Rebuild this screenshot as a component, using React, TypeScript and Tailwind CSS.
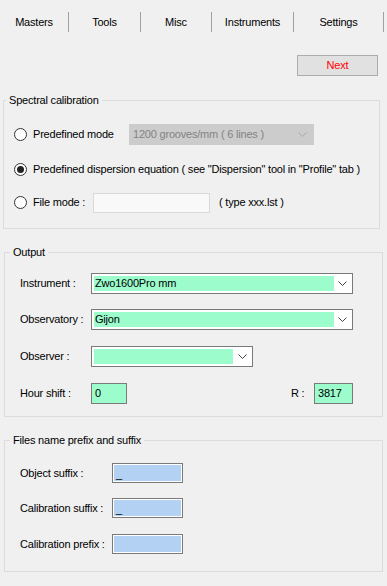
import React from 'react';

const tabs = [
  { label: 'Masters', w: 'w-[69px]' },
  { label: 'Tools', w: 'w-[72px]' },
  { label: 'Misc', w: 'w-[71px]' },
  { label: 'Instruments', w: 'w-[82px]' },
  { label: 'Settings', w: 'w-[90px]' },
];

const Chevron = ({ color = '#444' }: { color?: string }) => (
  <svg width="9" height="5" viewBox="0 0 9 5" className="shrink-0">
    <path d="M0.5 0.5 L4.5 4.5 L8.5 0.5" fill="none" stroke={color} strokeWidth="1" />
  </svg>
);

const Radio = ({ checked }: { checked?: boolean }) => (
  <span className="w-[13px] h-[13px] rounded-full border border-[#333] bg-white flex items-center justify-center shrink-0">
    {checked && <span className="w-[7px] h-[7px] rounded-full bg-[#222]" />}
  </span>
);

const GreenCombo = ({ value, width, fill }: { value: string; width: string; fill: string }) => (
  <div className={`${width} h-[21px] border border-[#7a7a7a] bg-white flex items-center pl-[2px] pr-[5px]`}>
    <div className={`${fill} h-[15px] bg-[#9cfccc] flex items-center pl-[1px]`}>{value}</div>
    <div className="flex-1 flex justify-end">
      <Chevron />
    </div>
  </div>
);

export default function App() {
  return (
    <div
      className="w-[387px] h-[586px] bg-[#f0f0f0] text-[11px] tracking-[-0.2px] text-black overflow-hidden whitespace-nowrap"
      style={{ fontFamily: '"Liberation Sans", Arial, sans-serif' }}
    >
      {/* onglets */}
      <div className="flex pt-[12px]">
        {tabs.map((t) => (
          <div key={t.label} className={`${t.w} h-[20px] border-r border-[#a0a0a0] flex items-center justify-center`}>
            {t.label}
          </div>
        ))}
      </div>

      <div className="flex justify-end pr-[9px] mt-[23px]">
        <button className="w-[81px] h-[21px] border border-[#adadad] bg-[#e1e1e1] text-[#ff0000] text-[11px] tracking-[-0.2px]">Next</button>
      </div>

      {/* Spectral calibration */}
      <fieldset className="ml-[3px] mt-[17px] w-[377px] border border-[#dcdcdc]">
        <legend className="ml-[2px] px-[3px] leading-[14px]">Spectral calibration</legend>
        <div className="pl-[10px] pb-[15px]">
          <div className="mt-[17px] h-[21px] flex items-center">
            <Radio />
            <span className="ml-[6px] w-[96px]">Predefined mode</span>
            <div className="w-[185px] h-[21px] bg-[#cccccc] flex items-center justify-between pl-[4px] pr-[7px] text-[#838383]">
              <span>1200 grooves/mm ( 6 lines )</span>
              <Chevron color="#a8a8a8" />
            </div>
          </div>
          <div className="mt-[14px] h-[21px] flex items-center">
            <Radio checked />
            <span className="ml-[6px]">Predefined dispersion equation ( see "Dispersion" tool in "Profile" tab )</span>
          </div>
          <div className="mt-[12px] h-[21px] flex items-center">
            <Radio />
            <span className="ml-[6px] w-[60px]">File mode :</span>
            <div className="w-[117px] h-[20px] border border-[#d9d9d9] bg-[#f9f9f9]" />
            <span className="ml-[9px]">( type xxx.lst )</span>
          </div>
        </div>
      </fieldset>

      {/* Output */}
      <fieldset className="ml-[4px] mt-[16px] w-[379px] border border-[#dcdcdc]">
        <legend className="ml-[5px] px-[3px] leading-[14px]">Output</legend>
        <div className="pl-[15px] pb-[12px]">
          <div className="mt-[14px] flex items-center">
            <span className="w-[71px]">Instrument :</span>
            <GreenCombo value="Zwo1600Pro mm" width="w-[262px]" fill="w-[240px]" />
          </div>
          <div className="mt-[15px] flex items-center">
            <span className="w-[71px]">Observatory :</span>
            <GreenCombo value="Gijon" width="w-[262px]" fill="w-[240px]" />
          </div>
          <div className="mt-[16px] flex items-center">
            <span className="w-[71px]">Observer :</span>
            <GreenCombo value="" width="w-[162px]" fill="w-[139px]" />
          </div>
          <div className="mt-[16px] flex items-center">
            <span className="w-[71px]">Hour shift :</span>
            <div className="w-[36px] h-[21px] border border-[#7a7a7a] bg-[#9cfccc] flex items-center pl-[3px]">0</div>
            <span className="ml-auto w-[23px]">R :</span>
            <div className="mr-[29px] w-[39px] h-[21px] border border-[#7a7a7a] bg-[#9cfccc] flex items-center pl-[3px]">3817</div>
          </div>
        </div>
      </fieldset>

      {/* Files name prefix and suffix */}
      <fieldset className="ml-[4px] mt-[16px] w-[379px] border border-[#dcdcdc]">
        <legend className="ml-[5px] px-[3px] leading-[14px]">Files name prefix and suffix</legend>
        <div className="pl-[15px] pb-[17px]">
          {[
            { label: 'Object suffix :', value: '_', mt: 'mt-[16px]' },
            { label: 'Calibration suffix :', value: '_', mt: 'mt-[15px]' },
            { label: 'Calibration prefix :', value: '', mt: 'mt-[16px]' },
          ].map((r) => (
            <div key={r.label} className={`${r.mt} flex items-center`}>
              <span className="w-[92px]">{r.label}</span>
              <div className="w-[71px] h-[20px] border border-[#7a7a7a] bg-[#b3d1f2] shadow-[inset_0_0_0_1px_#ffffff] flex items-end pl-[3px] pb-[1px] leading-[14px]">
                {r.value}
              </div>
            </div>
          ))}
        </div>
      </fieldset>
    </div>
  );
}
